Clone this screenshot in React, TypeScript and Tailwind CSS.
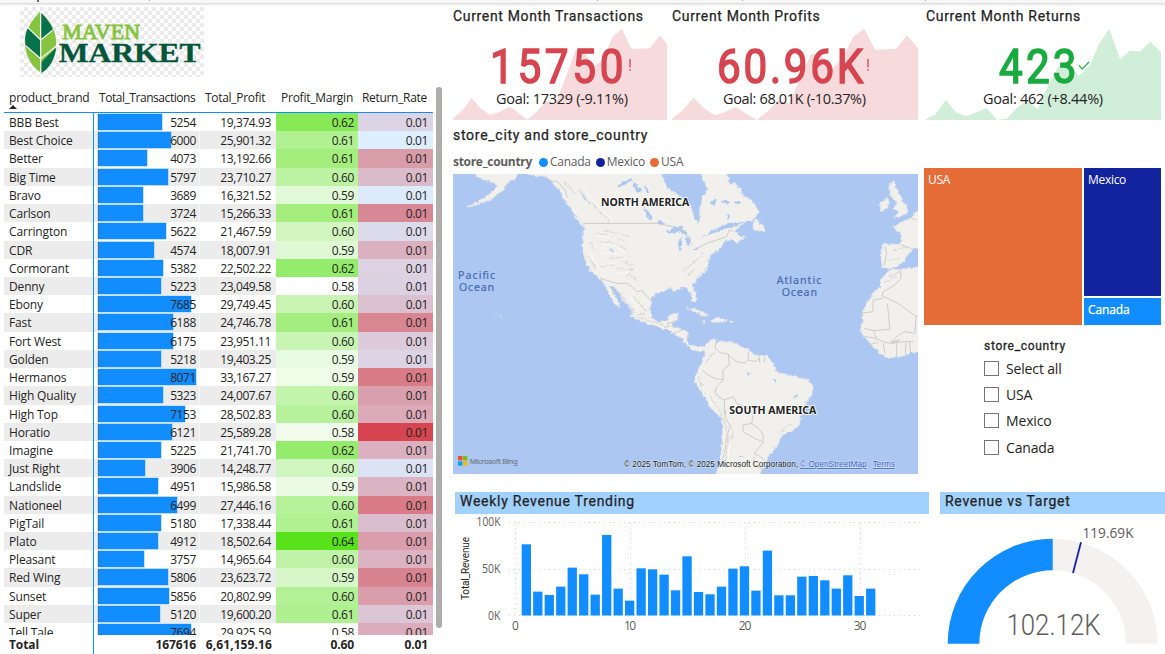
import React from "react";

type Row = [string, number, string, string, string, string];

const rows: Row[] = [
  ["BBB Best", 5254, "19,374.93", "0.62", "#88e956", "#dcd3e4"],
  ["Best Choice", 6000, "25,901.32", "0.61", "#b0f291", "#ddefff"],
  ["Better", 4073, "13,192.66", "0.61", "#a4ee7e", "#d99ca9"],
  ["Big Time", 5797, "23,710.27", "0.60", "#bcf3a2", "#dabbca"],
  ["Bravo", 3689, "16,321.52", "0.59", "#e2f9d8", "#dceafb"],
  ["Carlson", 3724, "15,266.33", "0.61", "#a3ee7d", "#d88794"],
  ["Carrington", 5622, "21,467.59", "0.60", "#d3f6c1", "#dcdbeb"],
  ["CDR", 4574, "18,007.91", "0.59", "#e0f9d5", "#dbb0bf"],
  ["Cormorant", 5382, "22,502.22", "0.62", "#93ec6b", "#dcd2e2"],
  ["Denny", 5223, "23,049.58", "0.58", "#ffffff", "#dcd1e2"],
  ["Ebony", 7685, "29,749.45", "0.60", "#c9f4b4", "#dbc1d0"],
  ["Fast", 6188, "24,746.78", "0.61", "#a3ee7e", "#d88692"],
  ["Fort West", 6175, "23,951.11", "0.60", "#c8f5b3", "#dccbdc"],
  ["Golden", 5218, "19,403.25", "0.59", "#eafbe3", "#dcd3e4"],
  ["Hermanos", 8071, "33,167.27", "0.59", "#eefce8", "#d97c88"],
  ["High Quality", 5323, "24,007.67", "0.60", "#c3f4ab", "#d99fad"],
  ["High Top", 7153, "28,502.83", "0.60", "#b7f19c", "#dba9b7"],
  ["Horatio", 6121, "25,589.28", "0.58", "#f2fced", "#d64550"],
  ["Imagine", 5225, "21,741.70", "0.62", "#95ec6c", "#dbb1c0"],
  ["Just Right", 3906, "14,248.77", "0.60", "#d0f6bf", "#dce3f4"],
  ["Landslide", 4951, "15,986.58", "0.59", "#ecfbe5", "#dbb4c4"],
  ["Nationeel", 6499, "27,446.16", "0.60", "#b5f299", "#d97c88"],
  ["PigTail", 5180, "17,338.44", "0.61", "#b0f191", "#dbbecd"],
  ["Plato", 4912, "18,502.64", "0.64", "#57e21b", "#d99dab"],
  ["Pleasant", 3757, "14,965.64", "0.60", "#c0f3a8", "#dbb3c2"],
  ["Red Wing", 5806, "23,623.72", "0.59", "#d7f7c8", "#d88390"],
  ["Sunset", 5856, "20,802.99", "0.60", "#b3f196", "#d99dab"],
  ["Super", 5120, "19,600.20", "0.61", "#aff190", "#dcc5d5"],
  ["Tell Tale", 7694, "29,925.59", "0.58", "#ffffff", "#dbacbb"],
];

const COLS = "grid grid-cols-[90px_106px_76px_82px_75px]";

function Logo() {
  return (
    <div className="ml-5 mt-1 h-[70px] w-[184px] bg-[repeating-conic-gradient(#ebebeb_0_25%,#fdfdfd_0_50%)] bg-[length:8px_8px]">
      <svg viewBox="60 21 552 210" className="h-[70px] w-[184px]">
        <path d="M120 36 C100 55 78 85 75 120 C73 160 92 200 124 219 C154 200 171 160 168 120 C165 82 143 54 120 36Z" fill="#86c440" />
        <path d="M123 38 C138 52 152 70 159 90 L123 120Z" fill="#06724b" />
        <path d="M84 83 L120 118 L120 173 L78 137 C73 118 76 98 84 83Z" fill="#06724b" />
        <path d="M168 143 C166 175 148 205 124 219 L124 187Z" fill="#06724b" />
        <path d="M122 36 V218 M83 82 L122 120 L161 88 M77 137 L122 176 L169 138" stroke="#fff" strokeWidth="3.5" fill="none" />
        <g fontFamily="'Liberation Serif', serif" fontWeight="700">
          <text x="187" y="118" fontSize="60" textLength="233" lengthAdjust="spacingAndGlyphs" fill="#86c440" fontWeight="400" stroke="#86c440" strokeWidth="2.6">MAVEN</text>
          <text x="176" y="187" fontSize="85" textLength="426" lengthAdjust="spacingAndGlyphs" fill="#04553a" stroke="#04553a" strokeWidth="1">MARKET</text>
        </g>
      </svg>
    </div>
  );
}

function BrandTable() {
  return (
    <div className="mt-[10px] flex pl-1 text-[12px] text-[#252423] [font-family:'Open_Sans',sans-serif]">
      <div className="w-[429px]">
        <div className={`${COLS} h-[26px] border-b border-[#118dff] leading-[21px]`}>
          <div className="relative pl-[5px] tracking-[-0.2px]">
            product_brand
            <svg viewBox="0 0 8 4" className="absolute bottom-[3px] left-[5px] h-1 w-2"><path d="M0 4L4 0L8 4Z" fill="#252423" /></svg>
          </div>
          <div className="whitespace-nowrap pl-[5px] tracking-[-0.45px]">Total_Transactions</div>
          <div className="pl-[5px] tracking-[-0.3px]">Total_Profit</div>
          <div className="pr-[5px] text-right tracking-[-0.25px]">Profit_Margin</div>
          <div className="pr-[6px] text-right tracking-[-0.3px]">Return_Rate</div>
        </div>
        <div className="h-[522px] overflow-hidden">
          {rows.map(([name, n, profit, margin, mc, rc], i) => (
            <div key={name} className={`${COLS} h-[18.22px] leading-[19px] tracking-[-0.4px] ${i % 2 ? "bg-[#ececec]" : "bg-white"}`}>
              <div className="border-r border-[#118dff] pl-[5px] tracking-[-0.15px]">{name}</div>
              <div className="relative border-r border-white/50 pr-[3px] text-right">
                <div className="absolute left-[4px] top-px h-4 border-l border-dashed border-[#4a6a90] bg-[#118dff] shadow-[0_0_0_0.5px_#8cc6ff]" style={{ width: (n / 8071) * 98 }} />
                <span className="relative">{n}</span>
              </div>
              <div className="pr-[5px] text-right">{profit}</div>
              <div className="pr-[4px] text-right" style={{ background: mc }}>{margin}</div>
              <div className="pr-[5px] text-right" style={{ background: rc }}>{"0.01"}</div>
            </div>
          ))}
        </div>
        <div className={`${COLS} h-[19px] font-bold leading-[19px] tracking-[-0.1px]`}>
          <div className="border-r border-[#118dff] pl-[5px]">Total</div>
          <div className="pr-[4px] text-right">167616</div>
          <div className="-ml-2 pr-[4px] text-right tracking-[0.1px]">6,61,159.16</div>
          <div className="pr-[4px] text-right">0.60</div>
          <div className="pr-[5px] text-right">0.01</div>
        </div>
      </div>
      <div className="ml-[3px] h-[541px] w-[6px] rounded-full bg-[#b0aeac]" />
    </div>
  );
}

interface KpiProps {
  title: string;
  value: string;
  goal: string;
  good?: boolean;
  box: string;
  size: string;
  shape: string;
  viewBox: string;
  valueClass: string;
  digitsClass: string;
  goalClass: string;
}

function Kpi({ title, value, goal, good, box, size, shape, viewBox, valueClass, digitsClass, goalClass }: KpiProps) {
  return (
    <section className={`relative h-[118px] ${box}`}>
      <svg viewBox={viewBox} className={`absolute left-0 top-[25px] h-[92px] ${size}`} preserveAspectRatio="none">
        <polygon points={shape} fill={good ? "#d1eed9" : "#f7dadc"} />
      </svg>
      <h2 className="relative h-[26px] whitespace-nowrap text-[14px] leading-[26px] tracking-[0.66px] text-[#252423] [-webkit-text-stroke:0.25px_#252423] [font-family:Roboto,sans-serif]">{title}</h2>
      <div className={`relative flex h-[60px] items-center pt-[15px] text-[48px] leading-[60px] [font-family:Roboto,sans-serif] ${good ? "text-[#1aab40]" : "text-[#d64550]"} ${valueClass}`}>
        <span className={`origin-left scale-x-[0.88] [-webkit-text-stroke:1.5px_currentColor] ${digitsClass}`}>{value}</span>
        {good ? (
          <svg viewBox="0 0 12 9" className="-mt-[3px] h-[9px] w-[12px]"><path d="M1 4.5L4.3 7.8L11 1" fill="none" stroke="#1aab40" strokeWidth="1.2" /></svg>
        ) : (
          <svg viewBox="0 0 4 12" className="-mt-[3px] h-3 w-1"><path d="M2 0V8.5M2 10V11.7" stroke="#d64550" strokeWidth="1.3" /></svg>
        )}
      </div>
      <div className={`relative whitespace-nowrap text-[14.5px] leading-5 text-[#252423] [font-family:'Open_Sans',sans-serif] ${goalClass}`}>{goal}</div>
    </section>
  );
}

function WorldMap() {
  return (
    <svg viewBox="0 0 1395 900" className="block h-[300px] w-[465px] bg-[#abc7f2]">
      <defs>
        <filter id="coast" x="-5%" y="-5%" width="110%" height="110%">
          <feTurbulence type="fractalNoise" baseFrequency="0.09" numOctaves="3" seed="4" />
          <feDisplacementMap in="SourceGraphic" scale="13" xChannelSelector="R" yChannelSelector="G" />
        </filter>
      </defs>
      <g transform="translate(-9 -12)">
        <g filter="url(#coast)" fill="#f1f0ed" stroke="#dfe3e6" strokeWidth="2" strokeLinejoin="round">
          <path d="M72 5L80 22L108 30L132 38L140 48L132 62L105 82L82 95L52 110L60 112L95 100L125 88L150 68L168 50L172 38L195 25L215 5Z" />
          <path d="M210 5L240 14L285 20L305 34L318 52L328 82L345 98L358 112L378 138L398 160L402 178L397 205L399 250L410 285L430 311L455 332L467 346L474 366L486 386L500 408L510 414L501 386L487 365L478 345L490 350L506 371L527 400L547 425L543 440L572 455L612 466L642 476L672 491L695 504L705 518L722 537L748 545L764 540L768 528L740 530L720 525L710 515L713 486L690 475L665 468L668 455L683 447L685 430L662 433L650 450L625 456L605 445L600 412L605 384L627 366L660 354L674 362L692 354L710 354L722 372L729 394L738 397L737 370L728 345L742 325L771 295L776 270L786 250L812 236L817 220L842 208L858 217L890 201L865 197L855 185L880 160L842 175L860 160L910 150L926 125L905 90L880 80L870 55L855 40L842 45L828 5L752 5L760 30L775 60L757 80L750 130L745 162L730 140L724 112L708 94L680 72L655 56L640 30L630 5Z" />
          <path d="M758 532L775 515L800 506L796 522L810 514L855 520L890 535L915 555L955 559L970 580L980 605L1030 619L1075 630L1091 650L1085 675L1065 702L1055 725L1047 770L1020 785L995 797L980 830L955 860L945 885L925 925L792 925L810 880L815 830L818 780L815 745L780 712L755 665L732 635L740 605L755 580L765 555Z" />
          <path d="M1315 300L1350 298L1380 294L1420 288L1420 548L1380 550L1360 558L1315 565L1290 550L1260 520L1235 490L1230 470L1240 455L1235 430L1250 400L1270 370L1290 350L1295 328Z" />
          <path d="M1295 222L1340 222L1350 224L1356 200L1345 185L1330 170L1355 157L1380 145L1395 128L1420 115L1420 232L1385 238L1372 256L1362 274L1340 291L1315 296L1295 289L1293 260Z" />
          <path d="M1318 42L1335 34L1340 60L1358 90L1373 115L1365 135L1330 143L1345 126L1330 116L1340 100L1322 78Z" />
          <path d="M1290 97L1315 84L1317 113L1292 125Z" />
          <path d="M905 176L917 143L927 158L945 172L944 184Z" />
          <path d="M710 413L742 419L777 438L760 438L728 422Z" />
          <path d="M780 454L803 442L832 450L810 459ZM838 454L850 453L849 457L840 459ZM755 455L766 454L765 458Z" />
          <path d="M368 138L388 143L404 165L394 162Z" />
          <path d="M150 435L158 445L151 448ZM138 427L145 429L143 432Z" strokeWidth="0" />
        </g>
        <g fill="#abc7f2" filter="url(#coast)">
          <path d="M648 188L665 174L690 170L714 190L708 197L690 187L672 190Z" />
          <path d="M688 208L698 200L694 240L686 242ZM704 200L722 205L720 230L710 222ZM720 244L748 230L746 238Z" />
          <path d="M580 104L592 120L608 142L602 150L588 132ZM550 32L566 50L576 62L564 68L552 50ZM585 45L600 66L588 66ZM500 45L540 25L548 30L515 50Z" />
          <path d="M620 158L635 150L642 158L630 165ZM775 95L800 88L795 104ZM812 92L840 94L832 106ZM828 130L842 140L832 146ZM850 96L872 92L864 104Z" />
          <path d="M750 205L790 180L840 158L870 160L842 170L800 185Z" />
          <path d="M386 56L402 88L412 92L392 66ZM480 240L490 236L488 248ZM966 626L980 630L978 638ZM1030 682L1044 672L1042 680ZM890 607L902 611L898 615ZM820 718L830 730L824 734ZM865 858L880 862L870 864Z" />
          <path d="M317 60L330 92L340 95L350 100L335 75L325 55Z" />
        </g>
        <g fill="none" stroke="#c9c6c2" strokeWidth="2.6" strokeLinejoin="round">
          <path d="M402 160H622L650 166L690 175L722 205M738 236L770 220L800 210L830 200L838 180L850 184" />
          <path d="M283 16L300 34L322 34L345 60L352 84" />
          <path d="M450 325L470 331L500 340L530 340L545 350L560 365L578 362L590 380L607 392" />
          <path d="M642 472L655 470L654 458L672 458L670 472M672 490L690 482L700 478" />
          <path d="M800 512L795 535L810 548L835 552L838 585L818 600L820 630L795 625L770 612L757 600M835 555L860 575L885 580L895 565L895 545M895 570L915 575L930 565M925 550L930 580M945 560L942 578M820 630L800 650L795 670L822 690L850 680L860 700L895 715L910 735L905 760L880 765L878 785L915 805L935 815M822 690L826 740L840 770L830 800L825 840L815 880M905 760L925 775L940 795L938 820L912 850M912 850L935 862L945 875M912 860L910 885L945 900" />
          <path d="M1305 228L1310 250L1303 285M1355 225L1385 236M1378 140L1400 152" />
          <path d="M1352 300L1353 325L1335 345L1300 365L1296 377L1340 398L1395 437L1420 445M1300 385L1270 390L1268 425L1235 430M1312 400L1320 478L1270 482L1242 475M1270 482L1280 505L1245 500M1280 508L1310 518L1325 520L1350 510L1322 515M1325 515L1345 495L1365 485L1395 490L1398 440M1300 520L1305 550M1340 520L1340 560M1368 518L1366 555M1378 515L1382 550M1265 520L1285 518M1325 520L1365 515L1390 515" />
        </g>
        <g fill="none" stroke="#d6d3cf" strokeWidth="3.2" strokeLinecap="round" opacity=".8" filter="url(#coast)">
          <path d="M412 255L440 300M450 290L490 285M440 190L470 195M450 215L490 220L530 240M480 265L520 262M500 295L545 300L530 320M390 60L410 90L445 120L478 155M340 35L375 70M495 355L530 395L555 430M550 380L570 400L590 425M560 440L640 465M460 180L500 190L540 200M505 205L530 215M520 275L550 285M560 435L590 430M420 215L430 240M540 315L560 330" />
          <path d="M700 302L740 270L760 250M712 318L735 296M765 580L780 560L795 545M745 620L765 665L800 705L820 745L835 800L825 880M790 660L812 690M842 765L850 790L836 820M985 790L1025 760" />
          <path d="M1300 340L1340 320M1320 320L1345 308M1330 240L1370 232M1320 270L1350 265" />
        </g>
        <g fill="none" stroke="#fbfaf8" strokeWidth="4" strokeLinecap="round" opacity=".8">
          <path d="M420 252L448 298M455 283L495 278M446 197L476 202M456 222L496 227L525 247M400 50L425 88L455 118L488 152M540 380L565 420M760 650L785 700M840 810L832 880M455 250L500 250M500 310L535 308" />
        </g>
        <g fontFamily="'Noto Sans', sans-serif">
          <g fontWeight="700" fill="#222" stroke="#fff" strokeWidth="5" paintOrder="stroke" fontSize="33">
            <text x="453" y="109" textLength="265" lengthAdjust="spacingAndGlyphs">NORTH AMERICA</text>
            <text x="838" y="732" textLength="261" lengthAdjust="spacingAndGlyphs">SOUTH AMERICA</text>
          </g>
          <g fill="#4a6cb0" fontSize="32" stroke="#4a6cb0" strokeWidth=".6">
            <text x="24" y="327" textLength="111">Pacific</text>
            <text x="27" y="363" textLength="105">Ocean</text>
            <text x="980" y="343" textLength="134">Atlantic</text>
            <text x="995" y="379" textLength="106">Ocean</text>
          </g>
          <text x="59" y="882" fontSize="23" textLength="144" fill="#777e8a" stroke="#777e8a" strokeWidth=".6">Microsoft Bing</text>
        </g>
        <path d="M24 858H37V871H24Z" fill="#f25022" />
        <path d="M39 858H52V871H39Z" fill="#7fba00" />
        <path d="M24 874H37V887H24Z" fill="#00a4ef" />
        <path d="M39 874H52V887H39Z" fill="#ffb900" />
        <g fontFamily="'Liberation Sans', sans-serif" fontSize="24.5" stroke="#fff" strokeWidth="3" strokeOpacity=".5" paintOrder="stroke">
          <text x="522" y="891" textLength="522" lengthAdjust="spacingAndGlyphs" fill="#1c1c1c">© 2025 TomTom, © 2025 Microsoft Corporation,</text>
          <text x="1050" y="891" textLength="200" lengthAdjust="spacingAndGlyphs" fill="#3a5fc0" textDecoration="underline">© OpenStreetMap</text>
          <text x="1268" y="891" textLength="67" lengthAdjust="spacingAndGlyphs" fill="#3a5fc0" textDecoration="underline">Terms</text>
        </g>
      </g>
    </svg>
  );
}

const legend = [
  ["Canada", "bg-[#118dff]"],
  ["Mexico", "bg-[#12239e]"],
  ["USA", "bg-[#e66c37]"],
];

const barTops = [177, 319, 329, 304, 247, 267, 328, 149, 310, 346, 249, 252, 268, 315, 213, 320, 327, 304, 250, 243, 316, 196, 330, 330, 274, 272, 285, 310, 270, 332, 310];

function WeeklyChart() {
  return (
    <svg viewBox="455 514 474 128" className="block h-[128px] w-[474px]" fontFamily="'Open Sans', sans-serif" fontSize="12" fill="#605e5c">
      <g stroke="#d4d4d4" strokeWidth="1" strokeDasharray="1 4">
        <path d="M509 522.5H921M509 569.5H921M509 615.5H921M515.5 523V615M630.5 523V615M745.5 523V615M860.5 523V615" />
      </g>
      {barTops.map((t, i) => {
        const y = 485.3 + t / 3;
        return <rect key={i} x={514.8 + (i + 1) * 11.48 - 4.6} y={y} width={9.3} height={615.5 - y} fill="#118dff" />;
      })}
      <text x="476.5" y="526" textLength="24" lengthAdjust="spacingAndGlyphs">100K</text>
      <text x="482" y="573" textLength="18.5" lengthAdjust="spacingAndGlyphs">50K</text>
      <text x="488" y="619.5" textLength="12.5" lengthAdjust="spacingAndGlyphs">0K</text>
      <text x="515.5" y="630" textAnchor="middle">0</text>
      <text x="630" y="630" textAnchor="middle" textLength="12">10</text>
      <text x="745" y="630" textAnchor="middle" textLength="12.5">20</text>
      <text x="860" y="630" textAnchor="middle" textLength="12.5">30</text>
      <text transform="translate(468.5 600) rotate(-90)" fontFamily="Roboto, sans-serif" fontSize="10" textLength="63" fill="#252423">Total_Revenue</text>
    </svg>
  );
}

function Gauge() {
  return (
    <svg viewBox="940 514 225 140" className="block h-[140px] w-[225px]">
      <path d="M947.7 643.7A105 105 0 0 1 1157.7 643.7H1126.1A73.4 73.4 0 0 0 979.3 643.7Z" fill="#f3f2f1" />
      <path d="M947.7 643.7A105 105 0 0 1 1052.7 538.7V570.3A73.4 73.4 0 0 0 979.3 643.7Z" fill="#118dff" />
      <path d="M1073 573L1081 542.3" stroke="#12239e" strokeWidth="1.8" />
      <text x="1082.5" y="537.5" fontFamily="'Open Sans', sans-serif" fontSize="14" textLength="51" lengthAdjust="spacingAndGlyphs" fill="#605e5c">119.69K</text>
      <text x="1006.5" y="635" fontFamily="Roboto, sans-serif" fontWeight="300" fontSize="30" textLength="94" lengthAdjust="spacingAndGlyphs" fill="#605e5c">102.12K</text>
    </svg>
  );
}

const heading = "text-[14px] tracking-[0.72px] text-[#252423] [-webkit-text-stroke:0.25px_#252423] [font-family:Roboto,sans-serif]";
const banner = `h-[22px] bg-[#a0d1ff] pl-[5px] leading-[18px] ${heading}`;

export default function App() {
  return (
    <main className="flex h-[654px] w-[1165px] flex-col overflow-hidden bg-white">
      <div className="flex h-[3px] w-full bg-[#f7f7f7] shadow-[0_1px_3px_#c8c8c8]">
        <i className="ml-[37px] h-[2px] w-[2px] bg-[#666]" />
        <i className="ml-[110px] h-px w-px bg-[#aaa]" />
        <i className="ml-[447px] h-px w-px bg-[#aaa]" />
        <i className="ml-[144px] h-px w-px bg-[#aaa]" />
        <i className="ml-[182px] h-px w-px bg-[#aaa]" />
      </div>
      <div className="flex h-[651px]">
        <div className="flex w-[453px] flex-col">
          <Logo />
          <BrandTable />
        </div>
        <div className="flex w-[712px] flex-col">
          <div className="flex h-[118px]">
            <Kpi
              title="Current Month Transactions" value="15750" goal="Goal: 17329 (-9.11%)"
              box="w-[214px] mr-[5px]" size="w-[214px]" viewBox="453.3 28 214.4 92"
              valueClass="pl-[37px]" digitsClass="tracking-[4.2px] -mr-[18px]" goalClass="pl-[43px] tracking-[-0.3px]"
              shape="453.3,118.3 463.3,110 472,98 481.7,109 491,115 500,111.7 510,106.7 519.3,113.3 527.7,119.7 537.3,111.7 547,101 556,103 566,78 576,50 585,53 595,66 603.3,60 613.3,36.7 622.7,28.7 632,49 651,48.3 660.3,35.3 667.7,44 667.7,120 453.3,120"
            />
            <Kpi
              title="Current Month Profits" value="60.96K" goal="Goal: 68.01K (-10.37%)"
              box="w-[246px] mr-[8px]" size="w-[246px]" viewBox="672 28 246 92"
              valueClass="pl-[45px]" digitsClass="tracking-[3.1px] -mr-[20px]" goalClass="pl-[51px] tracking-[-0.35px]"
              shape="672,118.5 683,110 693.3,97.7 705,109 715,115.3 725,112 735.7,107 746.7,114 757.3,120 768,111 778,101 789,103 800,79 811,54 820,54 832.7,67.7 841.7,60 853.3,36.7 864.3,28.7 875,49.7 896,49 907,35.3 918,48.3 918,120 672,120"
            />
            <Kpi
              good title="Current Month Returns" value="423" goal="Goal: 462 (+8.44%)"
              box="w-[235px]" size="w-[235px]" viewBox="926 28 235 92"
              valueClass="pl-[73px]" digitsClass="tracking-[3.6px] -mr-[13px]" goalClass="pl-[57px] tracking-[-0.27px]"
              shape="926,119 935,115 945.7,100 956.7,112.7 966,116 986.7,108.3 996.7,119.7 1006.7,118.7 1018.3,106.7 1027.7,100 1037.7,109.3 1048.3,85 1058.3,66.7 1068.3,64 1079,75.7 1090,65 1099,44 1109.3,28.7 1120,59 1129.7,51 1140,51.3 1150.3,41.7 1161,52.3 1161,120 926,120"
            />
          </div>
          <div className="flex">
            <div className="flex w-[487px] flex-col">
              <h2 className={`mt-[4px] h-[20px] leading-[20px] ${heading}`}>store_city and store_country</h2>
              <div className="mt-[7px] flex h-[20px] items-center text-[12px] tracking-[-0.25px] text-[#605e5c] [font-family:'Open_Sans',sans-serif]">
                <b className="mr-[8px] w-[78px] tracking-[-0.3px]">store_country</b>
                {legend.map(([name, dot]) => (
                  <span key={name} className="mr-[5px] flex items-center gap-[2px]">
                    <i className={`h-[9px] w-[9px] rounded-full ${dot}`} />
                    {name}
                  </span>
                ))}
              </div>
              <div className="mt-[2px]"><WorldMap /></div>
              <section className="ml-[2px] mt-[17.5px] w-[474px]">
                <h2 className={banner}>Weekly Revenue Trending</h2>
                <WeeklyChart />
              </section>
            </div>
            <div className="flex w-[225px] flex-col">
              <div className="-ml-4 mt-[47px] flex h-[157px] w-[238px] gap-[2px] text-[12px] leading-[16px] tracking-[-0.3px] text-white [font-family:'Open_Sans',sans-serif]">
                <div className="w-[158px] bg-[#e66c37] pl-[4px] pt-[4px]">USA</div>
                <div className="flex w-[77px] flex-col gap-[2px]">
                  <div className="h-[128px] bg-[#12239e] pl-[4px] pt-[4px]">Mexico</div>
                  <div className="h-[27px] bg-[#118dff] pl-[4px] pt-[4px] tracking-[-0.1px] [-webkit-text-stroke:0.25px_white]">Canada</div>
                </div>
              </div>
              <div className="ml-[44px] mt-[11.5px] h-[124px]">
                <h3 className="h-[21px] text-[12px] leading-[18px] tracking-[0.7px] text-[#252423] [-webkit-text-stroke:0.3px_#252423] [font-family:Roboto,sans-serif]">store_country</h3>
                <div className="flex flex-col text-[14px] tracking-[-0.15px] text-[#252423] [font-family:'Open_Sans',sans-serif]">
                  {["Select all", "USA", "Mexico", "Canada"].map((label) => (
                    <label key={label} className="flex h-[26.4px] items-center gap-[7px] pb-[5px]">
                      <i className="h-[15px] w-[15px] border border-[#767676] bg-white" />
                      {label}
                    </label>
                  ))}
                </div>
              </div>
              <section className="mt-[31px]">
                <h2 className={banner}>Revenue vs Target</h2>
                <Gauge />
              </section>
            </div>
          </div>
        </div>
      </div>
    </main>
  );
}
